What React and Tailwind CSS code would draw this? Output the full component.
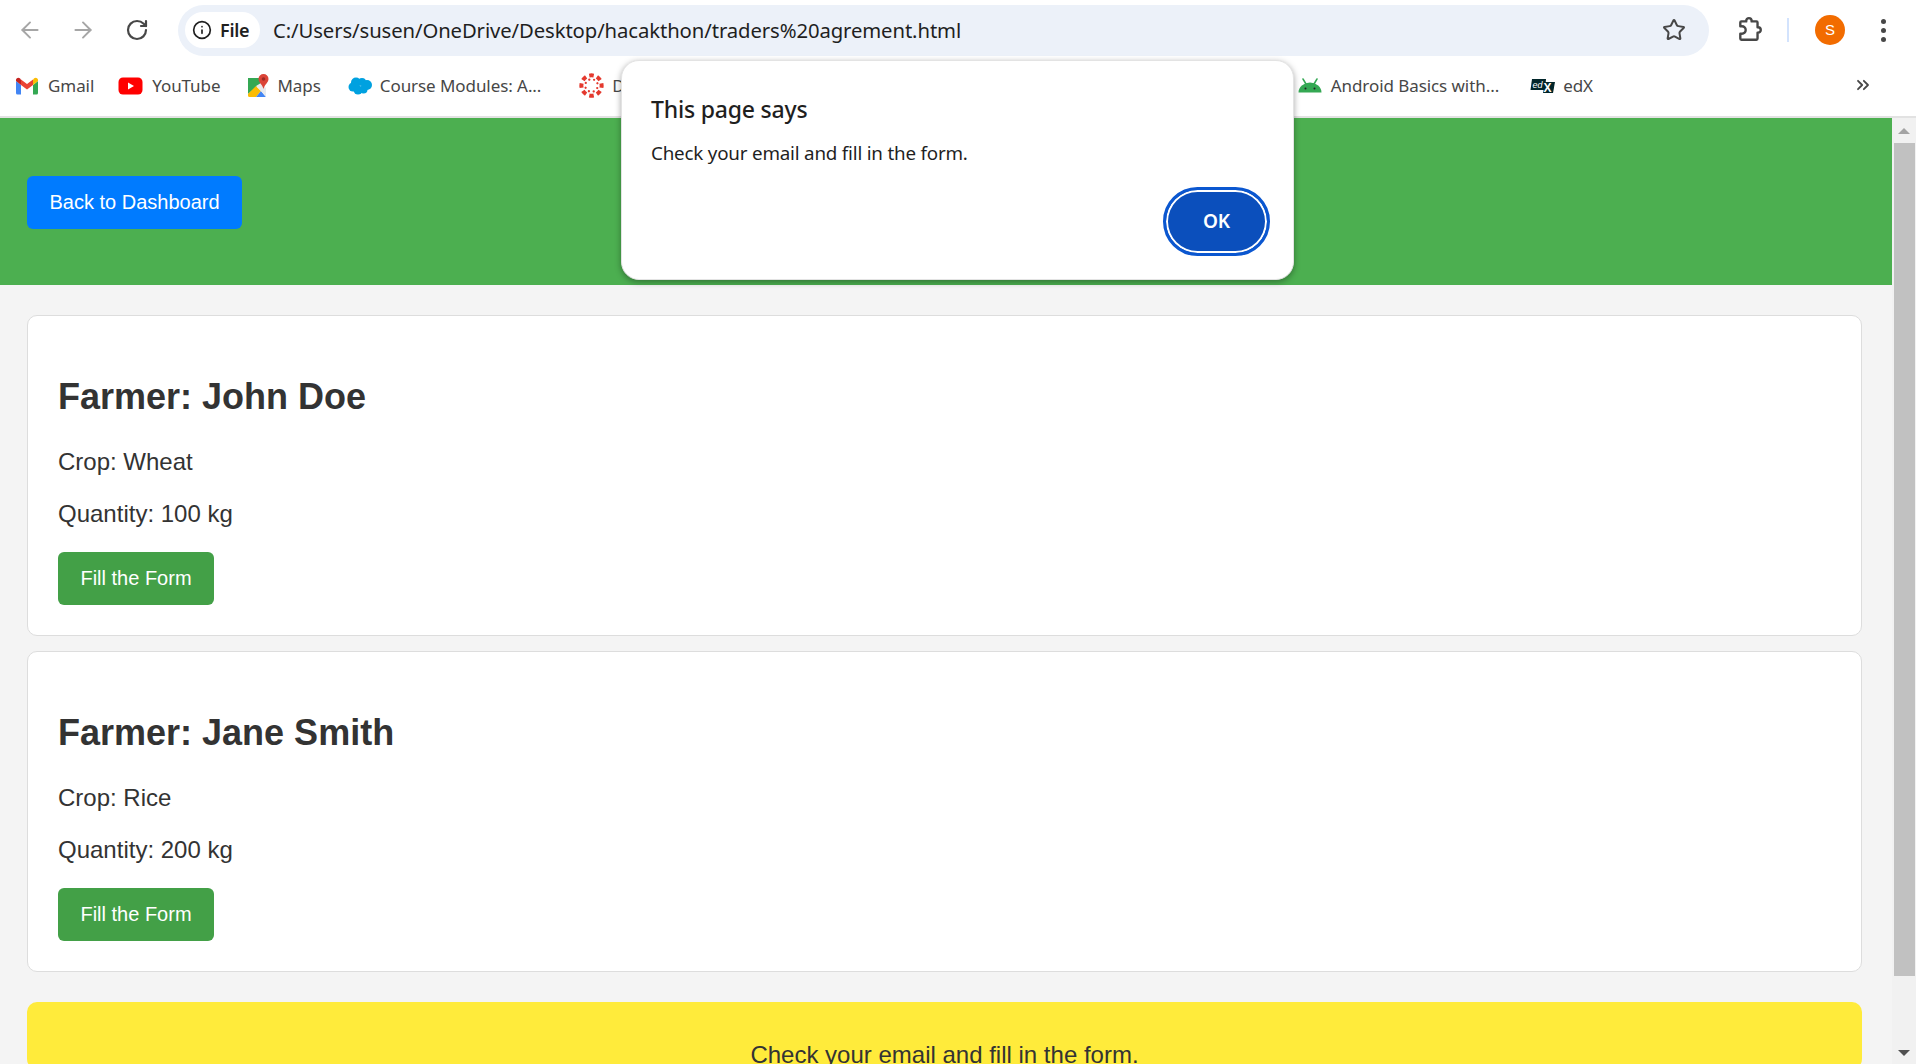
import React from 'react';
import { ArrowLeft, ArrowRight, RotateCw, Info, Star, ChevronsRight } from 'lucide-react';

const GmailIcon = () => (
  <svg width="24" height="18" viewBox="0 0 24 18">
    <path d="M1 4v12a1.5 1.5 0 0 0 1.5 1.5H6V8z" fill="#4285F4" />
    <path d="M23 4v12a1.5 1.5 0 0 1-1.5 1.5H18V8z" fill="#34A853" />
    <path d="M18 2.5V8l5-4V3c0-2-2.300-3-3.800-1.800z" fill="#FBBC04" />
    <path d="M6 8V2.500L12 7l6-4.500V8l-6 4.500z" fill="#EA4335" />
    <path d="M1 3v1l5 4V2.500L4.800 1.200C3.300 0 1 1 1 3z" fill="#C5221F" />
  </svg>
);

const YoutubeIcon = () => (
  <svg width="25" height="18" viewBox="0 0 25 18">
    <rect x="0.500" y="0.500" width="24" height="17" rx="4.500" fill="#FF0000" />
    <path d="M10 5.500v7l6-3.500z" fill="#fff" />
  </svg>
);

const MapsIcon = () => (
  <svg width="22" height="24" viewBox="0 0 22 24">
    <path d="M1 4h13v5L1 20z" fill="#34A853" />
    <path d="M1 20l8-8 5 5-5 6H2.500A1.500 1.500 0 0 1 1 21.500z" fill="#FBBC04" />
    <path d="M9 23l5-6 5 6z" fill="#4285F4" />
    <path d="M14 17l-5-5 5-3 5 5v9z" fill="#E8EAED" />
    <path d="M16.500 0a5 5 0 0 0-5 5c0 3.500 4 5.500 5 10 1-4.500 5-6.500 5-10a5 5 0 0 0-5-5z" fill="#DB4437" />
    <circle cx="16.500" cy="5" r="1.800" fill="#9E2B25" />
  </svg>
);

const CloudIcon = () => (
  <svg width="24" height="18" viewBox="0 0 24 18">
    <g fill="#00A1E0">
      <circle cx="8" cy="5.500" r="5" />
      <circle cx="14" cy="5" r="4" />
      <circle cx="19" cy="8" r="5" />
      <circle cx="5" cy="10" r="4.500" />
      <circle cx="10" cy="13" r="4.500" />
      <circle cx="15.500" cy="12.500" r="4" />
    </g>
  </svg>
);

const dots = [0, 45, 90, 135, 180, 225, 270, 315];

const CanvasIcon = () => (
  <svg width="25" height="25" viewBox="0 0 24 24">
    <g fill="#E4392E">
      {dots.map((a) => (
        <g key={a} transform={`rotate(${a} 12 12)`}>
          <path d="M9.500 .600a12 12 0 0 1 5 0l-.7 3.800a7.800 7.800 0 0 0-3.600 0z" />
          <circle cx="14.500" cy="6.500" r="1.100" />
        </g>
      ))}
    </g>
  </svg>
);

const AndroidIcon = () => (
  <svg width="24" height="15" viewBox="0 0 24 15">
    <path d="M0.500 14.500a11.500 10 0 0 1 23 0z" fill="#34A853" />
    <path d="M5 1l3 5M19 1l-3 5" stroke="#34A853" strokeWidth="1.500" strokeLinecap="round" />
    <circle cx="7.500" cy="10.500" r="1" fill="#202124" />
    <circle cx="16.500" cy="10.500" r="1" fill="#202124" />
  </svg>
);

const EdxIcon = () => (
  <svg width="25" height="15" viewBox="0 0 25 15">
    <path d="M2 1h14l-1 11H0.500z" fill="#02262B" />
    <path d="M15 4h10l-2 11H13z" fill="#02262B" />
    <text x="2.500" y="10" fontSize="9" fontStyle="italic" fill="#fff" fontFamily="'Liberation Sans', sans-serif">ed</text>
    <text x="13.500" y="14" fontSize="12" fontWeight="700" fill="#fff" fontFamily="'Liberation Sans', sans-serif">X</text>
  </svg>
);

const PuzzleIcon = () => (
  <svg width="28" height="28" viewBox="0 0 26 26" fill="none" stroke="#474747" strokeWidth="2.200" strokeLinejoin="round">
    <path d="M5 5h4.500V4.500a2.500 2.500 0 0 1 5 0V5H19a1 1 0 0 1 1 1v4.500h.5a2.500 2.500 0 0 1 0 5H20V21a1 1 0 0 1-1 1H5a1 1 0 0 1-1-1v-4.500h1.500a3.500 3.500 0 0 0 0-7H4V6a1 1 0 0 1 1-1z" />
  </svg>
);

const bookmarks = [
  { icon: <GmailIcon />, label: 'Gmail', cls: 'ml-[15px] gap-[9px]' },
  { icon: <YoutubeIcon />, label: 'YouTube', cls: 'ml-[24px] gap-[9px]' },
  { icon: <MapsIcon />, label: 'Maps', cls: 'ml-[27px] gap-[8px]' },
  { icon: <CloudIcon />, label: 'Course Modules: A...', cls: 'ml-[27px] gap-[8px]' },
  { icon: <CanvasIcon />, label: 'D', cls: 'ml-[38px] gap-[8px]' },
  { icon: <AndroidIcon />, label: 'Android Basics with...', cls: 'ml-[673px] gap-[9px]' },
  { icon: <EdxIcon />, label: 'edX', cls: 'ml-[31px] gap-[8px]' },
];

const farmers = [
  { name: 'John Doe', crop: 'Wheat', qty: '100 kg' },
  { name: 'Jane Smith', crop: 'Rice', qty: '200 kg' },
];

const FarmerCard = ({ farmer }) => (
  <div className="bg-white border border-[#dddddd] rounded-[10px] px-[30px] pt-[60px] pb-[30px] text-[#333333]">
    <h2 className="text-[36px] leading-[41px] font-bold">Farmer: {farmer.name}</h2>
    <p className="text-[24px] leading-[28px] mt-[31px]">Crop: {farmer.crop}</p>
    <p className="text-[24px] leading-[28px] mt-[24px]">Quantity: {farmer.qty}</p>
    <button className="mt-[24px] w-[156px] h-[53px] pb-[2px] bg-[#43a047] text-white text-[20px] rounded-[6px]">Fill the Form</button>
  </div>
);

export default function App() {
  return (
    <div className="relative h-screen w-full overflow-hidden flex flex-col bg-white font-['Liberation_Sans',sans-serif]">
      {/* Browser toolbar */}
      <div className="h-[60px] flex items-center shrink-0 font-['Noto_Sans',sans-serif]">
        <div className="w-[178px] flex items-center shrink-0">
          <ArrowLeft size={26} strokeWidth={1.8} className="ml-[17px] text-[#a6a6a6]" />
          <ArrowRight size={26} strokeWidth={1.8} className="ml-[27px] text-[#a6a6a6]" />
          <RotateCw size={24} strokeWidth={2.200} className="ml-[29px] text-[#474747]" />
        </div>
        <div className="w-[1531px] h-[51px] rounded-full bg-[#ecf1f9] flex items-center pl-[7px] pr-[23px] shrink-0">
          <div className="w-[75px] h-[36px] rounded-full bg-white flex items-center pl-[7px] gap-[8px] text-[#1f1f1f]">
            <Info size={20} strokeWidth={2} />
            <span className="text-[18px] font-semibold tracking-[-0.3px]">File</span>
          </div>
          <span className="ml-[13px] text-[20.300px] text-[#1f1f1f] tracking-[-0.1px] flex-1">C:/Users/susen/OneDrive/Desktop/hacakthon/traders%20agrement.html</span>
          <Star size={24} strokeWidth={2} className="text-[#474747]" />
        </div>
        <div className="ml-[27px] shrink-0"><PuzzleIcon /></div>
        <div className="ml-[23px] w-[2px] h-[24px] bg-[#d3e3fd] shrink-0" />
        <div className="ml-[26px] w-[30px] h-[30px] rounded-full bg-[#f26c00] text-white text-[15px] flex items-center justify-center shrink-0 font-['Liberation_Sans',sans-serif]">S</div>
        <div className="ml-[36px] flex flex-col gap-[4px] shrink-0">
          <span className="w-[5px] h-[5px] rounded-full bg-[#474747]" />
          <span className="w-[5px] h-[5px] rounded-full bg-[#474747]" />
          <span className="w-[5px] h-[5px] rounded-full bg-[#474747]" />
        </div>
      </div>

      {/* Bookmarks bar */}
      <div className="relative h-[58px] pb-[5px] shrink-0 flex items-center border-b-2 border-[#e2e2e2] font-['Noto_Sans',sans-serif] text-[17px] text-[#474747] tracking-[-0.07px]">
        {bookmarks.map((b) => (
          <div key={b.label} className={`flex items-center shrink-0 ${b.cls}`}>
            {b.icon}
            <span>{b.label}</span>
          </div>
        ))}
        <ChevronsRight size={20} strokeWidth={2.200} className="absolute left-[1853px] top-[15px] text-[#474747]" />
      </div>

      {/* Page */}
      <div className="flex flex-1 min-h-0">
        <main className="flex-1 min-w-0 overflow-hidden bg-[#f4f4f4]">
          <header className="h-[167px] pt-[2px] bg-[#4caf50] flex items-center px-[27px]">
            <button className="w-[215px] h-[53px] pb-[2px] bg-[#007bff] text-white text-[20px] rounded-[6px]">Back to Dashboard</button>
          </header>
          <div className="px-[27px] pr-[30px] pt-[30px] flex flex-col gap-[15px]">
            {farmers.map((f) => <FarmerCard key={f.name} farmer={f} />)}
            <div className="mt-[15px] bg-[#ffeb3b] rounded-[10px] pt-[39px] text-center text-[#333333] text-[24px] leading-[28px]">
              Check your email and fill in the form.
            </div>
          </div>
        </main>
        <div className="w-[24px] bg-[#f1f1f1] flex flex-col items-center shrink-0">
          <div className="h-[25px] flex items-center justify-center">
            <div className="w-0 h-0 border-x-[6px] border-x-transparent border-b-[6px] border-b-[#a3a3a3]" />
          </div>
          <div className="w-[21px] h-[833px] bg-[#c1c1c1]" />
          <div className="flex-1 flex items-end pb-[8px]">
            <div className="w-0 h-0 border-x-[6px] border-x-transparent border-t-[6px] border-t-[#505050]" />
          </div>
        </div>
      </div>

      {/* JS alert */}
      <div className="absolute left-[621px] top-[60px] w-[673px] h-[220px] bg-white rounded-[18px] border border-[#e3e3e3] shadow-[0_2px_6px_rgba(0,0,0,0.35)] px-[29px] font-['Noto_Sans',sans-serif] text-[#1f1f1f]">
        <h3 className="mt-[32px] text-[23px] leading-[32px] font-medium tracking-[-0.2px]">This page says</h3>
        <p className="mt-[14px] text-[18.800px] leading-[28px] tracking-[-0.2px]">Check your email and fill in the form.</p>
        <div className="mt-[20px] flex justify-end">
          <button className="w-[107px] h-[69px] mr-[-6px] rounded-full bg-[#0b4fbc] border-[3px] border-[#0b57d0] outline-none shadow-[inset_0_0_0_2px_#ffffff] text-white text-[19px] font-semibold">OK</button>
        </div>
      </div>
    </div>
  );
}
